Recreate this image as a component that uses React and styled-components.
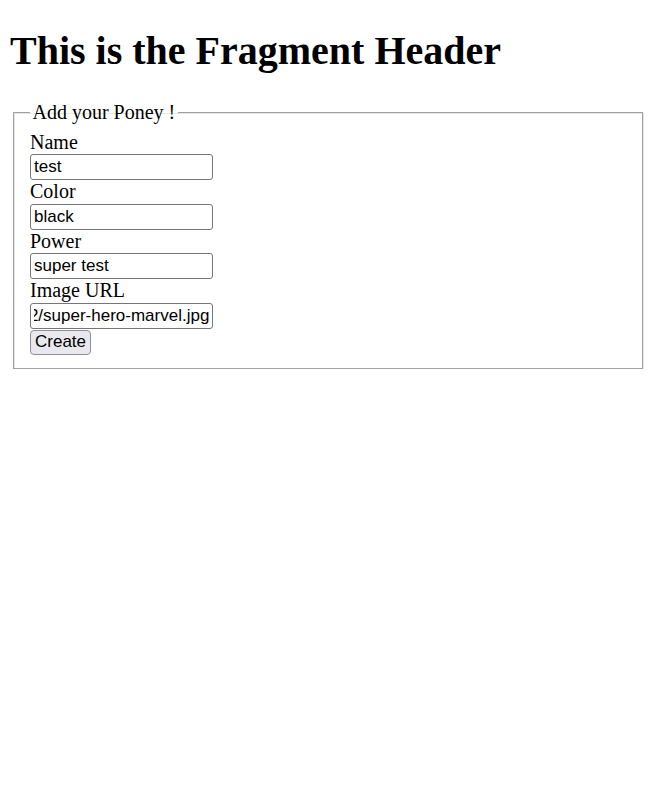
import { useEffect, useRef } from "react";
import styled, { createGlobalStyle } from "styled-components";

const GlobalStyle = createGlobalStyle`
  body {
    margin: 10px;
    font-family: "Liberation Serif", "Times New Roman", serif;
    font-size: 20px;
    color: #000;
    background: #fff;
  }
`;

const Header = styled.h1`
  font-size: 40px;
  font-weight: bold;
  margin: 17px 0 26.8px;
`;

const Form = styled.form`
  margin: 0;
`;

const Fieldset = styled.fieldset`
  margin: 0 3.5px 0 3px;
  padding: 7px 16px 13px;
  border: 1px solid #a0a0a0;
  box-shadow: inset 1px 1px 0 #e6e6e6, 1px 1px 0 #e6e6e6;
  min-inline-size: min-content;
`;

const Legend = styled.legend`
  padding: 0 2.5px;
  font-size: 20px;
`;

const Label = styled.label`
  display: block;
  line-height: 23.5px;
`;

const Input = styled.input`
  display: block;
  box-sizing: border-box;
  width: 183px;
  height: 26px;
  margin: 0;
  padding: 1px 3px;
  font-family: "Liberation Sans", Arial, sans-serif;
  font-size: 17px;
  color: #000;
  border: 1px solid #767676;
  border-radius: 3px;
  background: #fff;
  outline: none;
`;

const Button = styled.button`
  display: block;
  box-sizing: border-box;
  height: 25px;
  margin: 1px 0 0;
  padding: 1px 4px;
  font-family: "Liberation Sans", Arial, sans-serif;
  font-size: 17px;
  color: #000;
  background: #e9e9ed;
  border: 1px solid #8f8f9d;
  border-radius: 4px;
`;

const fields = [
  { label: "Name", value: "test" },
  { label: "Color", value: "black" },
  { label: "Power", value: "super test" },
  {
    label: "Image URL",
    value: "https://www.wallpapers.com/wallpaper-2/super-hero-marvel.jpg",
    end: true,
  },
];

const Field = ({ label, value, end }) => {
  const ref = useRef(null);
  useEffect(() => {
    if (end && ref.current) {
      ref.current.scrollLeft = ref.current.scrollWidth;
    }
  }, [end]);
  return (
    <>
      <Label>{label}</Label>
      <Input ref={ref} type="text" defaultValue={value} />
    </>
  );
};

const App = () => {
  return (
    <>
      <GlobalStyle />
      <Header>This is the Fragment Header</Header>
      <Form onSubmit={(e) => e.preventDefault()}>
        <Fieldset>
          <Legend>Add your Poney !</Legend>
          {fields.map((f) => (
            <Field key={f.label} {...f} />
          ))}
          <Button type="submit">Create</Button>
        </Fieldset>
      </Form>
    </>
  );
};

export default App;
